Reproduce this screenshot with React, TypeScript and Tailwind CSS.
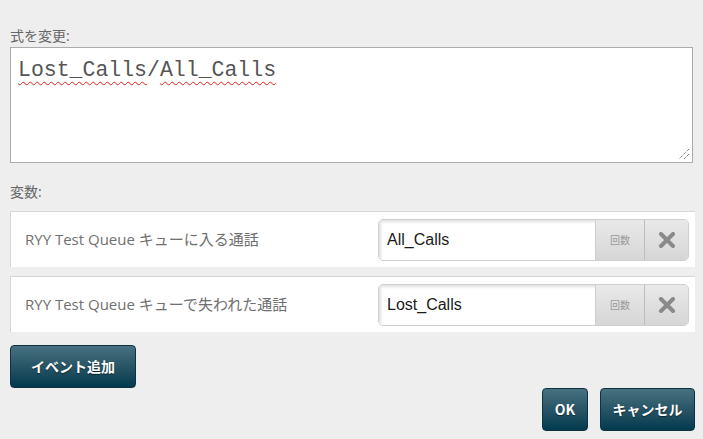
import React from 'react'

const labelFont = { fontFamily: '"Open Sans", "Noto Sans CJK JP", sans-serif' }

function VariableRow({ label, value }: { label: string; value: string }) {
  return (
    <div className="flex items-center h-[56px] bg-white border-t border-l border-[#d6d6d6] pl-[14px] pr-[6px]">
      <div className="flex-1 text-[15px] text-[#707070]" style={labelFont}>
        {label}
      </div>
      <div className="flex h-[42px] w-[311px] rounded-[5px] border border-[#cfcfcf] overflow-hidden">
        <div
          className="flex-1 flex items-center pl-[8px] text-[16px] text-[#1a1a1a] bg-white shadow-[inset_2px_2px_3px_rgba(0,0,0,0.12)]"
          style={{ fontFamily: '"Liberation Sans", Arial, sans-serif' }}
        >
          {value}
        </div>
        <div
          className="w-[49px] flex items-center justify-center border-l border-[#cfcfcf] bg-gradient-to-b from-[#e9e9e9] to-[#d6d6d6] text-[10px] text-[#9a9a9a]"
          style={{ fontFamily: '"Noto Sans CJK JP", sans-serif' }}
        >
          回数
        </div>
        <div className="w-[44px] flex items-center justify-center border-l border-[#bdbdbd] bg-gradient-to-b from-[#e9e9e9] to-[#d6d6d6]">
          <svg width="18" height="16" viewBox="0 0 18 16">
            <path d="M3 2 L15 14 M15 2 L3 14" stroke="#8a8a8a" strokeWidth="4" strokeLinecap="round" />
          </svg>
        </div>
      </div>
    </div>
  )
}

function DarkButton({ children, className }: { children: React.ReactNode; className?: string }) {
  return (
    <button
      className={`h-[43px] rounded-[4px] bg-gradient-to-b from-[#47717f] to-[#003a4e] text-white text-[14px] font-bold border border-[#0d3340] ${className ?? ''}`}
      style={{ fontFamily: '"Noto Sans CJK JP", "Liberation Sans", sans-serif', textShadow: '0 1px 1px rgba(0,0,0,0.5)' }}
    >
      {children}
    </button>
  )
}

export default function App() {
  return (
    <div className="w-[703px] h-[439px] bg-[#eeeeee] overflow-hidden">
      <div className="pl-[10px] pr-[8px] pt-[27px]">
        <div className="text-[14px] text-[#666666] leading-[18px]" style={labelFont}>
          式を変更:
        </div>
        <div className="relative mt-[2px] w-[683px] h-[116px] bg-white border border-[#ababab] pl-[7px] pt-[8px]">
          <div className="text-[21.5px] leading-[28px] text-[#555555]" style={{ fontFamily: '"Liberation Mono", "DejaVu Sans Mono", monospace' }}>
            <span className="underline decoration-wavy decoration-[#e02020] decoration-1 underline-offset-[5px]">Lost_Calls</span>/<span className="underline decoration-wavy decoration-[#e02020] decoration-1 underline-offset-[5px]">All_Calls</span>
          </div>
          <svg className="absolute right-[2px] bottom-[2px]" width="12" height="12" viewBox="0 0 12 12">
            <path d="M11 1 L1 11 M11 6 L6 11" stroke="#555" strokeWidth="1" strokeDasharray="1 1" />
          </svg>
        </div>
        <div className="mt-[20px] text-[14px] text-[#666666] leading-[18px]" style={labelFont}>
          変数:
        </div>
        <div className="mt-[10px] flex flex-col gap-[9px] w-[685px]">
          <VariableRow label="RYY Test Queue キューに入る通話" value="All_Calls" />
          <VariableRow label="RYY Test Queue キューで失われた通話" value="Lost_Calls" />
        </div>
        <DarkButton className="mt-[13px] w-[126px]">イベント追加</DarkButton>
        <div className="flex justify-end gap-[12px]">
          <DarkButton className="w-[46px]">OK</DarkButton>
          <DarkButton className="w-[95px]">キャンセル</DarkButton>
        </div>
      </div>
    </div>
  )
}
